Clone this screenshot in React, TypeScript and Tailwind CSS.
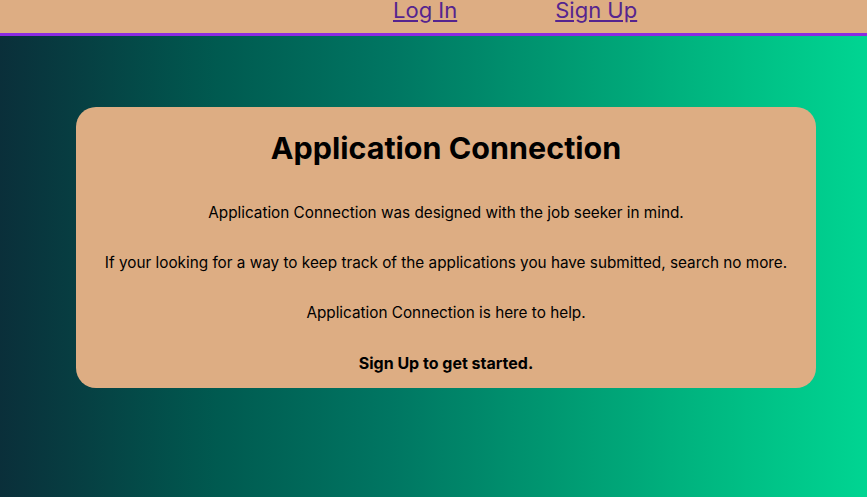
export default function App() {
  return (
    <div className="min-h-[497px] flex flex-col font-['Inter',sans-serif] text-black bg-[linear-gradient(to_right,#0a2f3a_0%,#005a50_25%,#007662_45%,#009a72_65%,#00ba82_83%,#00d592_100%)]">
      <header className="h-[36px] bg-[#ddad83] border-b-[3px] border-[#8a2be2] flex items-start pl-[393px] gap-[98px]">
        <a href="#" className="-mt-[1px] text-[22px] leading-[22px] text-[#55248f] underline">
          Log In
        </a>
        <a href="#" className="-mt-[1px] text-[22px] leading-[22px] text-[#55248f] underline">
          Sign Up
        </a>
      </header>
      <main className="pt-[71px] pl-[76px]">
        <section className="w-[740px] bg-[#ddad83] rounded-[20px] pt-[23px] pb-[13px] flex flex-col items-center text-center">
          <h1 className="text-[30.5px] leading-[36px] font-bold">Application Connection</h1>
          <div className="mt-[35px] flex flex-col gap-[26px] text-[15.3px] leading-[24px]">
            <p>Application Connection was designed with the job seeker in mind.</p>
            <p>If your looking for a way to keep track of the applications you have submitted, search no more.</p>
            <p>Application Connection is here to help.</p>
            <p className="font-bold text-[16px]">Sign Up to get started.</p>
          </div>
        </section>
      </main>
    </div>
  );
}
